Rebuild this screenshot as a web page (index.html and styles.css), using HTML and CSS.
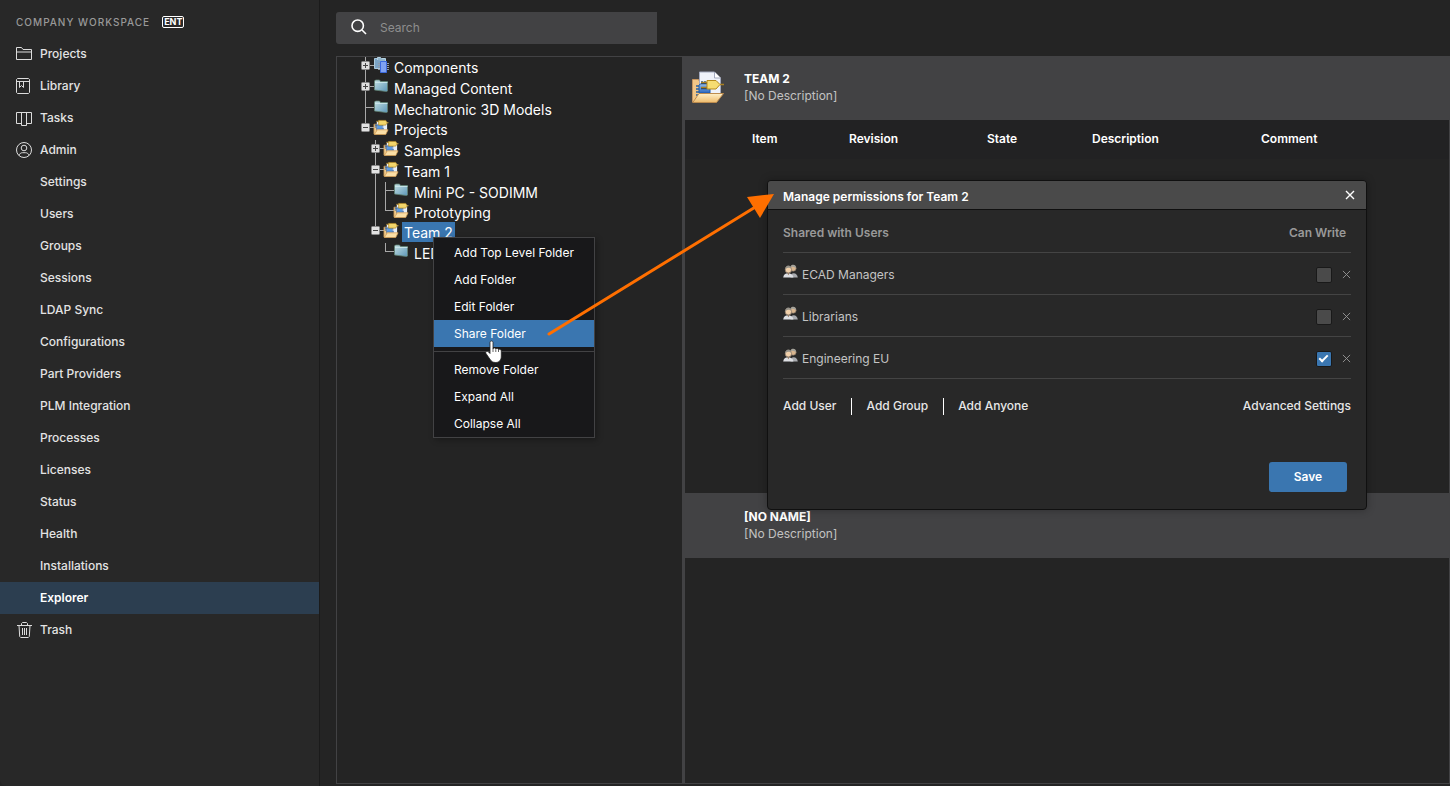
FILE: index.html
```html
<!DOCTYPE html>
<html lang="en">
<head>
  <meta charset="UTF-8" />
  <meta name="viewport" content="width=device-width, initial-scale=1" />
  <title>Explorer</title>
  <link rel="stylesheet" href="styles.css">
</head>
<body>
  <!-- shared icons -->
  <svg class="sprite" aria-hidden="true">
    <defs>
      <linearGradient id="blueFolder" x1="0" y1="0" x2="1" y2="1">
        <stop offset="0" stop-color="#c4e0e2" /><stop offset="1" stop-color="#5d96b8" />
      </linearGradient>
      <linearGradient id="openFolder" x1="0" y1="0" x2="0" y2="1">
        <stop offset="0" stop-color="#fff0c8" /><stop offset="1" stop-color="#eebb6c" />
      </linearGradient>
      <linearGradient id="chip" x1="0" y1="0" x2="0" y2="1">
        <stop offset="0" stop-color="#9cc6f2" /><stop offset="1" stop-color="#2b66bd" />
      </linearGradient>
    </defs>
    <symbol id="folder" viewBox="0 0 16 16">
      <path d="M1.500 4V3l1-1h4l1 1.500h7v9.500l-1 .5-12-1.500z" fill="url(#blueFolder)" stroke="#5f8272" stroke-width=".8" />
      <path d="M2 4.500h12.500" stroke="#d2ebed" stroke-width=".8" />
    </symbol>
    <symbol id="components" viewBox="0 0 16 16">
      <path d="M1.500 1.500h3l1 1h4v9h-8z" fill="#7ba4c6" stroke="#a9c9dd" />
      <path d="M4.500 3V.5h3l1 1h4V5" fill="#93b6cd" stroke="#b5d2e2" />
      <path d="M5 6.500h11M5 8.500h11M5 10.500h11M5 12.500h11" stroke="#8e98a8" />
      <path d="M7.500 4.500h6v11h-6z" fill="#7fa2f2" stroke="#3d6ae0" />
    </symbol>
    <symbol id="project" viewBox="0 0 32 32">
      <path d="M.5 31V8.500h6l1 2V31z" fill="#f2c687" stroke="#c59560" />
      <path d="M7.500 1h15l6 6v17h-21z" fill="#eff2f9" stroke="#a3a9bd" />
      <path d="M22.500 1v6h6" fill="#fff" stroke="#a3a9bd" />
      <path d="M7 14l3-2h8v10H7z" fill="url(#chip)" stroke="#1e5bac" />
      <path d="M4 15h3M4 18h3M4 21h3M4 24h3M10 10v2M13 10v2" stroke="#285f9f" stroke-width="1.500" />
      <path d="M9 12.500h7M9 17.500h6" stroke="#173e72" stroke-width="1.500" />
      <path d="M15 9.500h9l4 4-4 4.500H15z" fill="#f6dc72" stroke="#b68a1c" />
      <path d="M9 11.500h6M28 13.500h4M9 16.500h6" stroke="#a97f22" stroke-width="1.600" />
      <path d="M7 22.500h24.500l-7 9H.8z" fill="url(#openFolder)" stroke="#bd8c4f" />
    </symbol>
    <!-- small variant of the project folder, used in the tree -->
    <symbol id="projectSmall" viewBox="0 0 16 17">
      <path d="M.5 16V5.500h3V16z" fill="#efc98a" stroke="#c79450" stroke-width=".8" />
      <path d="M3.500 3h11v9h-11z" fill="#e7effa" />
      <path d="M1.500 6.500h9M1.500 8.500h9M3 10.500h8" stroke="#245da5" stroke-width="1.300" />
      <path d="M4 7h5v3H4z" fill="#5a9be4" />
      <path d="M5.500 1.500h7.500l1.500 2.500-1.500 2.500H5.500z" fill="#f3d66c" stroke="#b88d2a" stroke-width=".8" />
      <path d="M3 2.500h2.500M14 4h2" stroke="#c39b3e" />
      <path d="M4 11.500h11.500l-2.500 5H1z" fill="#fbdfa7" stroke="#d6a057" stroke-width=".8" />
    </symbol>
    <symbol id="plus" viewBox="0 0 9 9">
      <rect x=".5" y=".5" width="8" height="8" rx="1" fill="#dedede" stroke="#8b8b8b" />
      <path d="M2 4.500h5M4.500 2v5" stroke="#444" />
    </symbol>
    <symbol id="minus" viewBox="0 0 9 9">
      <rect x=".5" y=".5" width="8" height="8" rx="1" fill="#e2e2e2" stroke="#8b8b8b" />
      <path d="M2 4.500h5" stroke="#444" />
    </symbol>
    <symbol id="group" viewBox="0 0 14 13">
      <path d="M7 12.500c0-3 1-4 3-4s3.500 1.500 3.800 4z" fill="#a9abb0" />
      <circle cx="9.500" cy="4" r="2.800" fill="#d9b690" stroke="#6e6258" stroke-width=".6" />
      <path d="M7 2.500C8 0 12 0 12.300 4 11 2.500 9 2.500 7 2.500z" fill="#a3a29b" />
      <path d="M.2 12.500c.3-3 2-4 4.500-4s4.800 1.500 5 4z" fill="#dddfe3" />
      <circle cx="5" cy="5.300" r="3" fill="#f1d0aa" stroke="#77695c" stroke-width=".6" />
      <path d="M2 5c0-5 6-5 6 0-1-1.800-3-2-6 0z" fill="#96928a" />
      <path d="M4 8.500h2l-1 2z" fill="#8d6e52" />
    </symbol>
    <symbol id="close" viewBox="0 0 10 10">
      <path d="M1 1l8 8M9 1L1 9" fill="none" stroke="currentColor" />
    </symbol>
  </svg>

  <nav class="sidebar">
    <h1 class="workspace">COMPANY WORKSPACE <span class="badge">ENT</span></h1>
    <a class="nav-item" href="#">
      <svg class="nav-icon" viewBox="0 0 16 16"><path d="M.5 13.500v-12h5l1.500 2h8.500v10zM.5 6h15" /></svg>Projects</a>
    <a class="nav-item" href="#">
      <svg class="nav-icon" viewBox="0 0 16 16"><path d="M1.500.5h11l1 1v13l-1 1h-11l-1-1v-13zM.5 3.500h13M3.500 3.500v6l2-2 2 2v-6" /></svg>Library</a>
    <a class="nav-item" href="#">
      <svg class="nav-icon" viewBox="0 0 16 16"><path d="M.5 2.500h15v11h-5M5.500 13.500h-5v-11M5.500 2.500v13h5v-13" /></svg>Tasks</a>
    <a class="nav-item" href="#">
      <svg class="nav-icon" viewBox="0 0 16 16"><circle cx="8" cy="8" r="7.500" /><circle cx="8" cy="6" r="2.800" /><path d="M3 13.500c.5-2 2-2.800 3.500-2.800h3c1.500 0 3 .8 3.500 2.800" /></svg>Admin</a>
    <a class="nav-item sub" href="#">Settings</a>
    <a class="nav-item sub" href="#">Users</a>
    <a class="nav-item sub" href="#">Groups</a>
    <a class="nav-item sub" href="#">Sessions</a>
    <a class="nav-item sub" href="#">LDAP Sync</a>
    <a class="nav-item sub" href="#">Configurations</a>
    <a class="nav-item sub" href="#">Part Providers</a>
    <a class="nav-item sub" href="#">PLM Integration</a>
    <a class="nav-item sub" href="#">Processes</a>
    <a class="nav-item sub" href="#">Licenses</a>
    <a class="nav-item sub" href="#">Status</a>
    <a class="nav-item sub" href="#">Health</a>
    <a class="nav-item sub" href="#">Installations</a>
    <a class="nav-item sub active" href="#">Explorer</a>
    <a class="nav-item" href="#">
      <svg class="nav-icon" viewBox="0 0 16 16"><path d="M1 3.500h15M5.500 3.500v-2l1-1h4l1 1v2M3 3.500l.7 11 1 1h7.600l1-1 .7-11M6.500 6v7M8.500 6v7M10.500 6v7" /></svg>Trash</a>
  </nav>

  <main class="main">
    <label class="search">
      <svg class="search-icon" viewBox="0 0 16 16"><circle cx="6.700" cy="6.700" r="5.700" /><path d="M11 11l4 4" /></svg>
      <input type="text" placeholder="Search" aria-label="Search" />
    </label>

    <div class="explorer">
      <div class="tree-panel">
        <ul class="tree">
          <li><div class="row"><svg class="toggle"><use href="#plus" /></svg><svg class="icon"><use href="#components" /></svg><span class="name">Components</span></div></li>
          <li><div class="row"><svg class="toggle"><use href="#plus" /></svg><svg class="icon"><use href="#folder" /></svg><span class="name">Managed Content</span></div></li>
          <li><div class="row leaf"><svg class="icon"><use href="#folder" /></svg><span class="name">Mechatronic 3D Models</span></div></li>
          <li><div class="row"><svg class="toggle"><use href="#minus" /></svg><svg class="icon"><use href="#projectSmall" /></svg><span class="name">Projects</span></div>
            <ul>
              <li><div class="row"><svg class="toggle"><use href="#plus" /></svg><svg class="icon"><use href="#projectSmall" /></svg><span class="name">Samples</span></div></li>
              <li><div class="row"><svg class="toggle"><use href="#minus" /></svg><svg class="icon"><use href="#projectSmall" /></svg><span class="name">Team 1</span></div>
                <ul>
                  <li><div class="row leaf"><svg class="icon"><use href="#folder" /></svg><span class="name">Mini PC - SODIMM</span></div></li>
                  <li><div class="row leaf"><svg class="icon"><use href="#projectSmall" /></svg><span class="name">Prototyping</span></div></li>
                </ul>
              </li>
              <li><div class="row"><svg class="toggle"><use href="#minus" /></svg><svg class="icon"><use href="#projectSmall" /></svg><span class="name selected">Team 2</span></div>
                <ul>
                  <li><div class="row leaf"><svg class="icon"><use href="#folder" /></svg><span class="name">LED</span></div></li>
                </ul>
              </li>
            </ul>
          </li>
        </ul>
      </div>

      <div class="details">
        <section class="pane pane-top">
          <header class="pane-header">
            <svg class="pane-icon"><use href="#project" /></svg>
            <div>
              <h2>TEAM 2</h2>
              <p>[No Description]</p>
            </div>
          </header>
          <table class="items">
            <colgroup><col class="c-item"><col class="c-revision"><col class="c-state"><col class="c-description"><col></colgroup>
            <thead>
              <tr><th>Item</th><th>Revision</th><th>State</th><th>Description</th><th>Comment</th></tr>
            </thead>
          </table>
        </section>
        <section class="pane pane-bottom">
          <header class="pane-header">
            <span class="pane-icon"></span>
            <div>
              <h2>[NO NAME]</h2>
              <p>[No Description]</p>
            </div>
          </header>
        </section>
      </div>
    </div>
  </main>

  <!-- folder context menu -->
  <div class="context-menu" role="menu">
    <button role="menuitem">Add Top Level Folder</button>
    <button role="menuitem">Add Folder</button>
    <button role="menuitem">Edit Folder</button>
    <button role="menuitem" class="hover">Share Folder</button>
    <hr />
    <button role="menuitem">Remove Folder</button>
    <button role="menuitem">Expand All</button>
    <button role="menuitem">Collapse All</button>
  </div>

  <!-- permissions dialog -->
  <div class="dialog" role="dialog" aria-labelledby="dialogTitle">
    <div class="dialog-header">
      <h2 id="dialogTitle">Manage permissions for Team 2</h2>
      <button class="close" aria-label="Close"><svg><use href="#close" /></svg></button>
    </div>
    <div class="dialog-body">
      <table class="shares">
        <colgroup><col><col class="c-check"><col class="c-remove"></colgroup>
        <thead>
          <tr><th>Shared with Users</th><th colspan="2">Can Write</th></tr>
        </thead>
        <tbody>
          <tr>
            <td><label for="w1"><svg class="group"><use href="#group" /></svg>ECAD Managers</label></td>
            <td class="check"><input type="checkbox" id="w1" /></td>
            <td class="remove"><button aria-label="Remove"><svg><use href="#close" /></svg></button></td>
          </tr>
          <tr>
            <td><label for="w2"><svg class="group"><use href="#group" /></svg>Librarians</label></td>
            <td class="check"><input type="checkbox" id="w2" /></td>
            <td class="remove"><button aria-label="Remove"><svg><use href="#close" /></svg></button></td>
          </tr>
          <tr>
            <td><label for="w3"><svg class="group"><use href="#group" /></svg>Engineering EU</label></td>
            <td class="check"><input type="checkbox" id="w3" checked /></td>
            <td class="remove"><button aria-label="Remove"><svg><use href="#close" /></svg></button></td>
          </tr>
        </tbody>
      </table>
      <div class="links">
        <button>Add User</button>
        <button>Add Group</button>
        <button>Add Anyone</button>
        <button class="advanced">Advanced Settings</button>
      </div>
      <div class="dialog-footer">
        <button class="save">Save</button>
      </div>
    </div>
  </div>

  <!-- arrow from the menu entry to the dialog -->
  <svg class="arrow" viewBox="0 0 230 150" aria-hidden="true">
    <path d="M4 144L212 16" stroke="#ff6f00" stroke-width="3" stroke-linecap="round" />
    <path d="M229 4L202 7l13 21z" fill="#ff6f00" />
  </svg>
  <svg class="cursor" viewBox="0 0 18 24" aria-hidden="true">
    <path d="M5 2.500c0-2 3-2 3 0V9c.3-1.500 2.600-1.400 2.800.2.500-1.200 2.500-1 2.700.5.700-1 2.800-.7 2.800 1.300V16c0 4-2 6.500-5.500 6.500-3 0-4.500-1-6-3.500L1 13.500c-1-1.800 1-3 2.300-1.700L5 13.500z" fill="#fff" stroke="#222" stroke-width=".8" />
    <path d="M8 9v3M10.800 9.500V12M13.500 10v2" stroke="#222" stroke-width=".7" />
  </svg>
</body>
</html>
```
FILE: styles.css
```css
* {
  box-sizing: border-box;
}
body {
  margin: 0;
  height: 100vh;
  display: flex;
  overflow: hidden;
  background: #242424;
  color: #e6e6e6;
  font-family: Inter, "Liberation Sans", sans-serif;
  font-size: 12px;
}
h1, h2, p, ul {
  margin: 0;
  padding: 0;
}
button {
  padding: 0;
  border: none;
  background: none;
  color: inherit;
  font: inherit;
  cursor: pointer;
}
svg {
  flex: none;
}
.sprite {
  position: absolute;
  width: 0;
  height: 0;
}

/* sidebar */
.sidebar {
  flex: none;
  width: 320px;
  padding-top: 6px;
  background: #282828;
  border-right: 1px solid #1b1b1b;
  border-bottom-left-radius: 6px;
}
.workspace {
  display: flex;
  align-items: center;
  gap: 12px;
  height: 32px;
  padding-left: 16px;
  color: #999;
  font-size: 10px;
  font-weight: 500;
  letter-spacing: 1px;
}
.badge {
  padding: 0 1px;
  border: 1px solid #fff;
  border-radius: 2px;
  color: #fff;
  font-size: 9px;
  font-weight: 700;
  line-height: 10px;
  letter-spacing: 0;
}
.nav-item {
  display: flex;
  gap: 8px;
  height: 32px;
  padding-left: 16px;
  color: #e3e3e3;
  font-weight: 500;
  line-height: 31px;
  text-decoration: none;
}
.nav-item.sub {
  padding-left: 40px;
}
.nav-item.active {
  background: #2c3e50;
  color: #fff;
  font-weight: 600;
}
.nav-icon {
  width: 16px;
  height: 16px;
  margin-top: 8px;
  fill: none;
  stroke: #dcdcdc;
}

/* main area */
.main {
  flex: 1;
  display: flex;
  flex-direction: column;
  gap: 12px;
  min-width: 0;
  padding: 12px 0 2px 16px;
}
.search {
  display: flex;
  align-items: center;
  gap: 13px;
  width: 321px;
  height: 32px;
  padding: 0 0 2px 15px;
  background: #424244;
  border-radius: 3px 0 0 3px;
}
.search-icon {
  width: 16px;
  height: 16px;
  fill: none;
  stroke: #fff;
  stroke-width: 1.6;
}
.search input {
  flex: 1;
  min-width: 0;
  padding: 0;
  border: none;
  outline: none;
  background: none;
  color: #fff;
  font: inherit;
}
.search input::placeholder {
  color: #8e8e8e;
}
.explorer {
  flex: 1;
  display: flex;
  min-height: 0;
  border: 1px solid #424244;
}
.tree-panel {
  flex: none;
  width: 348px;
  padding-left: 24px;
  border-right: 3px solid #424244;
}

/* tree: each item draws its own piece of the guide line */
.tree, .tree ul {
  list-style: none;
}
.tree ul {
  padding-left: 10px;
}
.tree li {
  background: linear-gradient(#a8a8a8, #a8a8a8) 4px 0 / 1px 100% no-repeat;
}
.tree li:last-child {
  background-size: 1px 9px;
}
.row {
  display: flex;
  height: 21px;
  background: linear-gradient(#a8a8a8, #a8a8a8) 4px 8px / 9px 1px no-repeat;
}
.row.leaf {
  height: 20px;
  padding-left: 12px;
}
.toggle {
  width: 9px;
  height: 9px;
  margin: 4px 3px 0 0;
}
.icon {
  width: 16px;
  height: 16px;
}
.name {
  height: 20px;
  margin-left: 3px;
  padding: 0 2px;
  color: #fff;
  font-size: 14px;
  line-height: 22px;
}
.name.selected {
  background: #3a76b0;
}

/* right side */
.details {
  flex: 1;
  display: flex;
  flex-direction: column;
  min-width: 0;
}
.pane {
  min-height: 0;
}
.pane-top {
  flex: 3;
}
.pane-bottom {
  flex: 2;
}
.pane-header {
  display: flex;
  align-items: center;
  gap: 20px;
  height: 63px;
  padding: 0 0 4px 7px;
  background: #424244;
}
.pane-bottom .pane-header {
  height: 65px;
  padding-bottom: 0;
}
.pane-icon {
  width: 32px;
  height: 32px;
}
.pane-header h2 {
  color: #fff;
  font-size: 12px;
  font-weight: 700;
  line-height: 17px;
}
.pane-header p {
  color: #c2c2c2;
  line-height: 17px;
}
.items {
  width: 100%;
  table-layout: fixed;
  border-collapse: collapse;
  background: #222223;
}
.items th {
  height: 39px;
  padding: 0 0 2px;
  color: #fff;
  font-weight: 600;
  text-align: left;
}
.items th:first-child {
  padding-left: 67px;
}
.c-item {
  width: 164px;
}
.c-revision {
  width: 138px;
}
.c-state {
  width: 105px;
}
.c-description {
  width: 169px;
}

/* context menu */
.context-menu {
  position: absolute;
  left: 433px;
  top: 237px;
  width: 162px;
  padding-top: 1px;
  background: #18181a;
  border: 1px solid #424244;
  box-shadow: 2px 2px 6px rgba(0, 0, 0, .3);
}
.context-menu button {
  display: block;
  width: 100%;
  height: 27px;
  padding-left: 20px;
  color: #fff;
  text-align: left;
}
.context-menu .hover {
  background: #3a76b0;
}
.context-menu hr {
  height: 1px;
  margin: 4px 0;
  border: none;
  background: #424244;
}

/* dialog */
.dialog {
  position: absolute;
  left: 767px;
  top: 180px;
  width: 600px;
  background: #282828;
  border: 1px solid #101010;
  border-radius: 4px;
  box-shadow: 0 0 8px rgba(0, 0, 0, .3);
  overflow: hidden;
}
.dialog-header {
  display: flex;
  align-items: center;
  justify-content: space-between;
  height: 29px;
  padding: 0 11px 0 15px;
  background: #4a4a4a;
  border-bottom: 1px solid #101010;
}
.dialog-header h2 {
  padding-top: 2px;
  color: #fff;
  font-size: 12px;
  font-weight: 600;
}
.close {
  color: #fff;
}
.close svg, .remove svg {
  display: block;
  width: 10px;
  height: 10px;
}
.close svg {
  stroke-width: 1.4;
}
.dialog-body {
  padding: 0 15px 17px;
}
.shares {
  width: 100%;
  table-layout: fixed;
  border-collapse: collapse;
}
.c-check {
  width: 43px;
}
.c-remove {
  width: 19px;
}
.shares th, .shares td {
  height: 42px;
  padding: 3px 0 0;
  border-bottom: 1px solid #444;
  text-align: left;
}
.shares th {
  color: #999;
  font-weight: 600;
}
.shares td {
  color: #c4c4c4;
}
.shares label {
  display: flex;
  gap: 4px;
  line-height: 22px;
}
.group {
  width: 15px;
  height: 14px;
}
.check input {
  appearance: none;
  display: block;
  width: 16px;
  height: 16px;
  margin: 0 0 0 27px;
  border: 1px solid #191919;
  border-radius: 2px;
  background: #4a4a4a;
}
.check input:checked {
  background: #3a76b0;
}
.check input:checked::after {
  content: "";
  display: block;
  width: 3px;
  height: 7px;
  margin: 1px 0 0 4px;
  border: solid #fff;
  border-width: 0 2px 2px 0;
  transform: rotate(45deg);
}
.remove button {
  display: block;
  margin-left: auto;
  color: #999;
}
.remove svg {
  width: 9px;
  height: 9px;
}
.links {
  display: flex;
  height: 17px;
  margin-top: 19px;
  font-weight: 500;
}
.links button {
  padding-bottom: 2px;
}
.links button + button {
  margin-left: 15px;
  padding-left: 14px;
  border-left: 1px solid #fff;
}
.links .advanced {
  margin-left: auto;
  border: none;
}
.dialog-footer {
  display: flex;
  justify-content: flex-end;
  margin-top: 47px;
  padding-right: 4px;
}
.save {
  width: 78px;
  height: 30px;
  border-radius: 3px;
  background: #3a76b0;
  color: #fff;
  font-weight: 600;
}

/* overlays */
.arrow {
  position: absolute;
  left: 545px;
  top: 190px;
  width: 230px;
  height: 150px;
  pointer-events: none;
}
.cursor {
  position: absolute;
  left: 485px;
  top: 340px;
  width: 18px;
  height: 24px;
  pointer-events: none;
}
```
